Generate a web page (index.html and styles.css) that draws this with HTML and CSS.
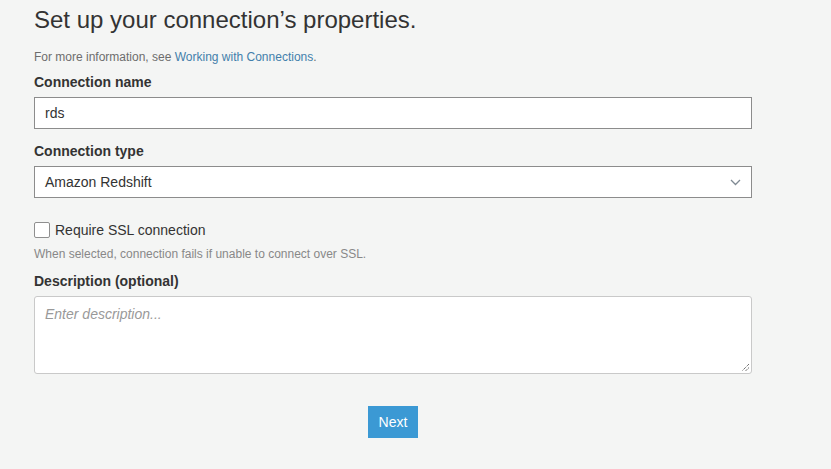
FILE: index.html
```html
<!DOCTYPE html>
<html>
<head>
<meta charset="utf-8">
<link rel="stylesheet" href="styles.css">
</head>
<body>
<main class="form">
  <h1 class="title">Set up your connection’s properties.</h1>
  <p class="info">For more information, see <a class="link">Working with Connections</a>.</p>
  <label class="label label-first">Connection name</label>
  <div class="input">rds</div>
  <label class="label">Connection type</label>
  <div class="select">
    <span>Amazon Redshift</span>
    <svg class="chevron" width="11" height="7" viewBox="0 0 11 7"><path d="M1 1 L5.5 5.5 L10 1" fill="none" stroke="#7f8a93" stroke-width="1.3"/></svg>
  </div>
  <div class="check-row">
    <span class="checkbox"></span>
    <span class="check-label">Require SSL connection</span>
  </div>
  <p class="help">When selected, connection fails if unable to connect over SSL.</p>
  <label class="label label-desc">Description (optional)</label>
  <div class="textarea">
    <span class="placeholder">Enter description...</span>
    <svg class="grip" width="9" height="9" viewBox="0 0 9 9"><path d="M8 1 L1 8 M8 4.5 L4.5 8" stroke="#333" stroke-width="1" stroke-dasharray="1 1"/></svg>
  </div>
  <div class="actions"><button class="next">Next</button></div>
</main>
</body>
</html>
```
FILE: styles.css
```css
html, body {
  margin: 0;
  padding: 0;
  background: #f4f5f4;
}
body {
  font-family: "Liberation Sans", Arial, sans-serif;
  color: #333;
}
.form {
  width: 718px;
  margin-left: 34px;
  display: flex;
  flex-direction: column;
}
.title {
  margin: 0;
  padding-top: 6px;
  font-size: 24px;
  line-height: 28px;
  font-weight: normal;
  color: #333;
}
.info {
  margin: 15px 0 0;
  font-size: 12px;
  line-height: 16px;
  color: #6d6d6d;
}
.link {
  color: #437fab;
}
.label {
  display: block;
  margin-top: 13px;
  font-size: 14px;
  line-height: 18px;
  font-weight: bold;
  color: #333;
}
.label-first { margin-top: 8px; }
.label-desc { margin-top: 10px; }
.input, .select {
  margin-top: 6px;
  box-sizing: border-box;
  height: 32px;
  border: 1px solid #8c8c8c;
  background: #fff;
  font-size: 14px;
  line-height: 30px;
  padding: 0 10px;
  color: #333;
}
.select {
  display: flex;
  justify-content: space-between;
  align-items: center;
  padding-right: 10px;
}
.chevron { display: block; }
.check-row {
  margin-top: 24px;
  display: flex;
  align-items: center;
  gap: 5px;
  height: 16px;
}
.checkbox {
  box-sizing: border-box;
  width: 16px;
  height: 16px;
  border: 1px solid #8f8f8f;
  border-radius: 2px;
  background: #fff;
}
.check-label {
  font-size: 14px;
  line-height: 16px;
  color: #333;
}
.help {
  margin: 8px 0 0;
  font-size: 12px;
  line-height: 16px;
  color: #888;
}
.textarea {
  position: relative;
  margin-top: 6px;
  box-sizing: border-box;
  height: 78px;
  border: 1px solid #c9c9c9;
  border-radius: 3px;
  background: #fff;
  padding: 8px 10px;
}
.placeholder {
  font-size: 14px;
  line-height: 18px;
  font-style: italic;
  color: #999;
}
.grip {
  position: absolute;
  right: 1px;
  bottom: 1px;
}
.actions {
  margin-top: 32px;
  display: flex;
  justify-content: center;
}
.next {
  width: 50px;
  height: 32px;
  border: none;
  background: #3b99d4;
  color: #fff;
  font-family: "Liberation Sans", Arial, sans-serif;
  font-size: 14px;
  padding: 0;
}
```
